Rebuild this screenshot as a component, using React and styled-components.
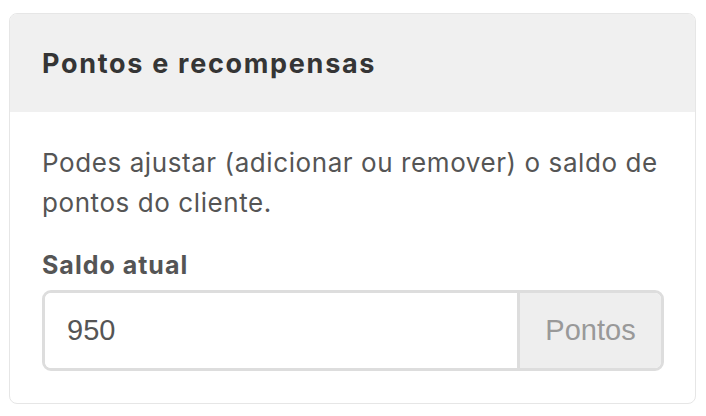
import React from "react";
import styled, { createGlobalStyle } from "styled-components";

const GlobalStyle = createGlobalStyle`
  body {
    margin: 0;
    background: #fff;
    font-family: Inter, "Noto Sans", sans-serif;
  }
`;

const Page = styled.div`
  padding: 13px 10px 13px 9px;
`;

const Card = styled.div`
  border: 1px solid #e6e6e6;
  border-radius: 8px;
  overflow: hidden;
  background: #fff;
`;

const CardHeader = styled.div`
  background: #f0f0f0;
  height: 98px;
  display: flex;
  align-items: center;
  padding: 0 32px;
`;

const Title = styled.h2`
  margin: 0;
  font-size: 27px;
  font-weight: 700;
  color: #353535;
  letter-spacing: 1.7px;
`;

const CardBody = styled.div`
  padding: 31px 31px 32px 32px;
`;

const Text = styled.p`
  margin: 0 0 26px;
  font-size: 26px;
  line-height: 40px;
  letter-spacing: 0.58px;
  color: #555;
`;

const Label = styled.label`
  display: block;
  font-size: 25px;
  font-weight: 700;
  letter-spacing: 1px;
  color: #555;
  line-height: 32px;
  margin-bottom: 9px;
`;

const InputGroup = styled.div`
  display: flex;
  height: 81px;
  border: 3px solid #ddd;
  border-radius: 9px;
  overflow: hidden;
  box-sizing: border-box;
`;

const Input = styled.input`
  flex: 1;
  min-width: 0;
  border: none;
  outline: none;
  padding: 0 22px;
  font-family: "Liberation Sans", Arial, sans-serif;
  font-size: 29px;
  color: #555;
  background: #fff;
`;

const Addon = styled.span`
  display: flex;
  align-items: center;
  justify-content: center;
  width: 141px;
  border-left: 3px solid #ddd;
  background: #eee;
  font-family: "Liberation Sans", Arial, sans-serif;
  font-size: 29px;
  color: #999;
`;

export default function App() {
  return (
    <>
      <GlobalStyle />
      <Page>
        <Card>
          <CardHeader>
            <Title>Pontos e recompensas</Title>
          </CardHeader>
          <CardBody>
            <Text>
              Podes ajustar (adicionar ou remover) o saldo de pontos do cliente.
            </Text>
            <Label htmlFor="saldo">Saldo atual</Label>
            <InputGroup>
              <Input id="saldo" defaultValue="950" />
              <Addon>Pontos</Addon>
            </InputGroup>
          </CardBody>
        </Card>
      </Page>
    </>
  );
}
